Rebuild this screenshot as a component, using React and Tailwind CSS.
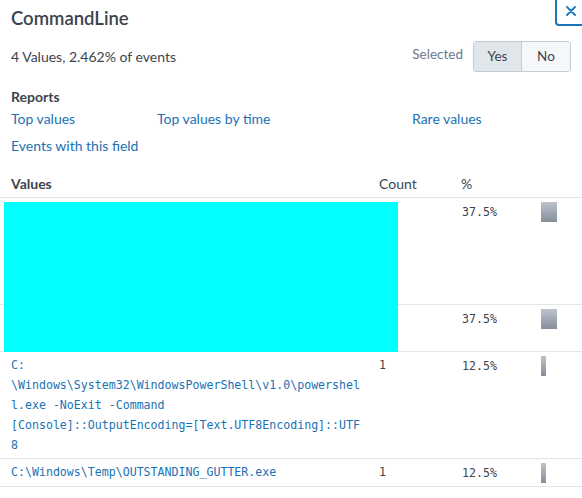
import React from 'react';

const rows = [
  { lines: 5, count: '', pct: 37.5 },
  { lines: 2, count: '', pct: 37.5 },
  {
    text: [
      'C:',
      '\\Windows\\System32\\WindowsPowerShell\\v1.0\\powershel',
      'l.exe -NoExit -Command',
      '[Console]::OutputEncoding=[Text.UTF8Encoding]::UTF',
      '8',
    ],
    count: '1',
    pct: 12.5,
  },
  { text: ['C:\\Windows\\Temp\\OUTSTANDING_GUTTER.exe'], count: '1', pct: 12.5 },
];

const mono = { fontFamily: '"DejaVu Sans Mono", "Liberation Mono", monospace' };

const App = () => {
  return (
    <div
      className="relative w-[582px] h-[498px] overflow-hidden bg-white text-[#3c444d]"
      style={{ fontFamily: 'Lato, "Open Sans", sans-serif' }}
    >
      <button className="absolute right-[-4px] top-[-4px] w-[31px] h-[30px] border-2 border-[#1b75bb] rounded-[4px] bg-white flex items-center justify-center">
        <svg width="10" height="10" viewBox="0 0 10 10">
          <path d="M1 1 L9 9 M9 1 L1 9" stroke="#1b75bb" strokeWidth="1.8" strokeLinecap="round" />
        </svg>
      </button>

      <div className="px-[11px] pt-[6px]">
        <h1 className="text-[18.5px] leading-[24px] font-semibold">CommandLine</h1>

        <div className="mt-[11px] flex items-center justify-between">
          <span className="text-[14px]">4 Values, 2.462% of events</span>
          <div className="flex items-center gap-[10px]">
            <span className="text-[13.5px] text-[#6c7887] -mt-[4px]">Selected</span>
            <div className="flex h-[31px] border border-[#c3cbd4] rounded-[3px] overflow-hidden text-[13.5px]">
              <div className="w-[48px] flex items-center justify-center bg-[#e1e6eb] border-r border-[#c3cbd4]">Yes</div>
              <div className="w-[48px] flex items-center justify-center bg-[#f6f7f9]">No</div>
            </div>
          </div>
        </div>

        <h2 className="mt-[16px] text-[14px] leading-[18px] font-bold">Reports</h2>
        <div className="mt-[4px] grid grid-cols-[146px_255px_1fr] gap-y-[9px] text-[14px] leading-[18px] text-[#1a72b5]">
          <a>Top values</a>
          <a>Top values by time</a>
          <a>Rare values</a>
          <a className="col-span-3">Events with this field</a>
        </div>
      </div>

      <div className="mt-[20px]">
        <div className="grid grid-cols-[368px_82px_80px_1fr] pl-[11px] pb-[4px] border-b border-[#dfe3e8] text-[14px] leading-[18px]">
          <span className="font-bold">Values</span>
          <span>Count</span>
          <span>%</span>
          <span />
        </div>

        <div className="relative">
          {rows.map((r, i) => (
            <div
              key={i}
              className="grid grid-cols-[368px_82px_80px_1fr] pl-[11px] py-[3px] border-b border-[#e1e6eb] text-[11.6px] leading-[20px]"
              style={mono}
            >
              <div className="text-[#1a72b5]">
                {r.text
                  ? r.text.map((t, j) => <div key={j} className="whitespace-pre">{t}</div>)
                  : Array.from({ length: r.lines }).map((_, j) => <div key={j} className="h-[20px]" />)}
              </div>
              <div>{r.count}</div>
              <div className="pl-[1px] pt-[1px]">{r.pct}%</div>
              <div>
                <div
                  className="mt-[1px] h-[20px] bg-gradient-to-b from-[#bcc3cc] to-[#858e9a]"
                  style={{ width: `${(r.pct / 37.5) * 16}px` }}
                />
              </div>
            </div>
          ))}
          <div className="absolute left-[4px] top-[4px] w-[394px] h-[150px] bg-[#00ffff]" />
        </div>
      </div>
    </div>
  );
};

export default App;
